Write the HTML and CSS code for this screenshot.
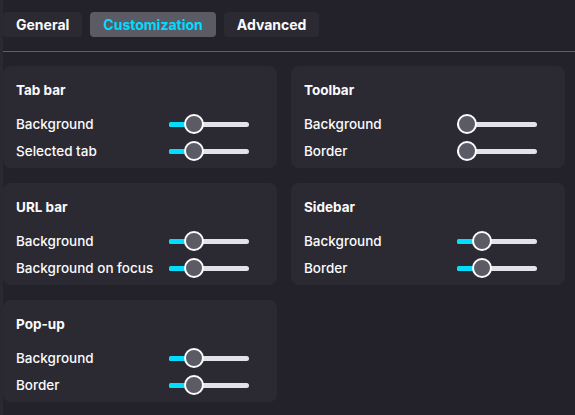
FILE: index.html
```html
<!DOCTYPE html>
<html lang="en">
<head>
<meta charset="utf-8">
<title>Customization</title>
<link rel="stylesheet" href="styles.css">
</head>
<body>
<div class="page">
  <nav class="tabs">
    <div class="tab">General</div>
    <div class="tab active">Customization</div>
    <div class="tab">Advanced</div>
  </nav>
  <hr class="divider">
  <main class="grid">
    <section class="card">
      <h2 class="title">Tab bar</h2>
      <div class="row"><span class="label">Background</span><div class="slider"><div class="track"><div class="fill" style="width:25px"></div></div><div class="thumb" style="left:15px"></div></div></div>
      <div class="row"><span class="label">Selected tab</span><div class="slider"><div class="track"><div class="fill" style="width:25px"></div></div><div class="thumb" style="left:15px"></div></div></div>
    </section>
    <section class="card">
      <h2 class="title">Toolbar</h2>
      <div class="row"><span class="label">Background</span><div class="slider"><div class="track"><div class="fill" style="width:0px"></div></div><div class="thumb" style="left:0px"></div></div></div>
      <div class="row"><span class="label">Border</span><div class="slider"><div class="track"><div class="fill" style="width:0px"></div></div><div class="thumb" style="left:0px"></div></div></div>
    </section>
    <section class="card">
      <h2 class="title">URL bar</h2>
      <div class="row"><span class="label">Background</span><div class="slider"><div class="track"><div class="fill" style="width:25px"></div></div><div class="thumb" style="left:15px"></div></div></div>
      <div class="row"><span class="label">Background on focus</span><div class="slider"><div class="track"><div class="fill" style="width:25px"></div></div><div class="thumb" style="left:15px"></div></div></div>
    </section>
    <section class="card">
      <h2 class="title">Sidebar</h2>
      <div class="row"><span class="label">Background</span><div class="slider"><div class="track"><div class="fill" style="width:25px"></div></div><div class="thumb" style="left:15px"></div></div></div>
      <div class="row"><span class="label">Border</span><div class="slider"><div class="track"><div class="fill" style="width:25px"></div></div><div class="thumb" style="left:15px"></div></div></div>
    </section>
    <section class="card">
      <h2 class="title">Pop-up</h2>
      <div class="row"><span class="label">Background</span><div class="slider"><div class="track"><div class="fill" style="width:25px"></div></div><div class="thumb" style="left:15px"></div></div></div>
      <div class="row"><span class="label">Border</span><div class="slider"><div class="track"><div class="fill" style="width:25px"></div></div><div class="thumb" style="left:15px"></div></div></div>
    </section>
  </main>
</div>
</body>
</html>
```

FILE: styles.css
```css
html {
  background: #2a2931;
}
body {
  margin: 0;
  font-family: Inter, "Noto Sans", "Liberation Sans", sans-serif;
  font-size: 13px;
  color: #fbfbfe;
}
.page {
  margin-left: 3px;
  min-height: 415px;
  background: #23222b;
  padding-top: 12px;
  box-sizing: border-box;
}
.tabs {
  display: flex;
  gap: 8px;
}
.tab {
  height: 25px;
  line-height: 25px;
  padding: 0 13px;
  border-radius: 4px;
  background: #2b2a33;
  font-size: 14px;
  font-weight: 700;
  color: #fbfbfe;
}
.tab.active {
  background: #5b5b66;
  color: #00ddff;
}
.divider {
  border: 0;
  height: 1px;
  background: #5f5e68;
  margin: 14px 0 14px 0;
}
.grid {
  display: grid;
  grid-template-columns: 274px 274px;
  column-gap: 14px;
  row-gap: 15px;
}
.card {
  background: #2b2a33;
  border-radius: 8px;
  padding: 14px 0 5px 13px;
  height: 102px;
  box-sizing: border-box;
}
.title {
  margin: 0 0 12px 0;
  font-size: 13.5px;
  line-height: 20px;
  font-weight: 700;
}
.row {
  display: grid;
  grid-template-columns: 1fr 80px;
  padding-right: 28px;
  height: 24px;
  align-items: center;
}
.row + .row {
  margin-top: 3px;
}
.label {
  line-height: 20px;
  font-size: 13.5px;
  font-weight: 500;
}
.slider {
  position: relative;
  width: 80px;
  height: 20px;
}
.track {
  position: absolute;
  left: 0;
  right: 0;
  top: 8px;
  height: 5px;
  border-radius: 3px;
  background: #e2e2e8;
  overflow: hidden;
}
.fill {
  height: 100%;
  background: #00ddff;
}
.thumb {
  position: absolute;
  top: 0;
  width: 20px;
  height: 20px;
  box-sizing: border-box;
  border-radius: 50%;
  background: #5b5b66;
  border: 2px solid #fbfbfe;
}
```
